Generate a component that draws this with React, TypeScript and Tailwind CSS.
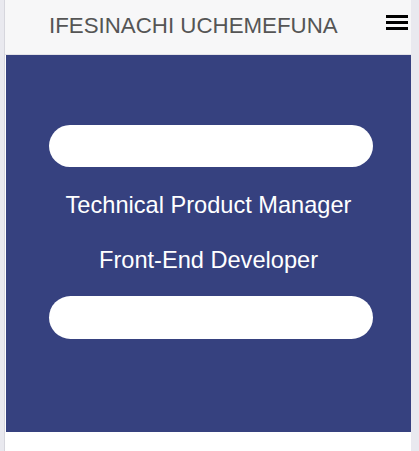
export default function App() {
  return (
    <div
      className="flex h-[451px] w-[419px] overflow-hidden bg-[#e9e9ef]"
      style={{ fontFamily: '"Liberation Sans", Arial, sans-serif' }}
    >
      <div className="w-[4px] shrink-0" />
      <div className="w-px shrink-0 bg-[#d6d6dd]" />
      <div className="flex w-[406px] shrink-0 flex-col bg-white">
        <header className="flex h-[55px] items-start border-b border-[#e3e3e8] bg-[#f7f7f8]">
          <h1 className="ml-[44px] mt-[13px] text-[22.3px] leading-[26px] text-[#555555]">
            IFESINACHI UCHEMEFUNA
          </h1>
          <button className="ml-auto mr-[3px] mt-[15px] flex w-[22px] flex-col gap-[3.5px]">
            <span className="h-[2.6px] w-full bg-black" />
            <span className="h-[2.6px] w-full bg-black" />
            <span className="h-[2.6px] w-full bg-black" />
          </button>
        </header>

        <section className="ml-px flex h-[377px] flex-col items-center bg-[#36417f] text-white">
          <div className="ml-[5px] mt-[70px] h-[42px] w-[324px] rounded-full bg-white" />
          <p className="mt-[24px] text-[23.6px] leading-[28px]">Technical Product Manager</p>
          <p className="mt-[27px] text-[23.6px] leading-[28px]">Front-End Developer</p>
          <div className="ml-[5px] mt-[22px] h-[43px] w-[324px] rounded-full bg-white" />
        </section>
      </div>
    </div>
  );
}
